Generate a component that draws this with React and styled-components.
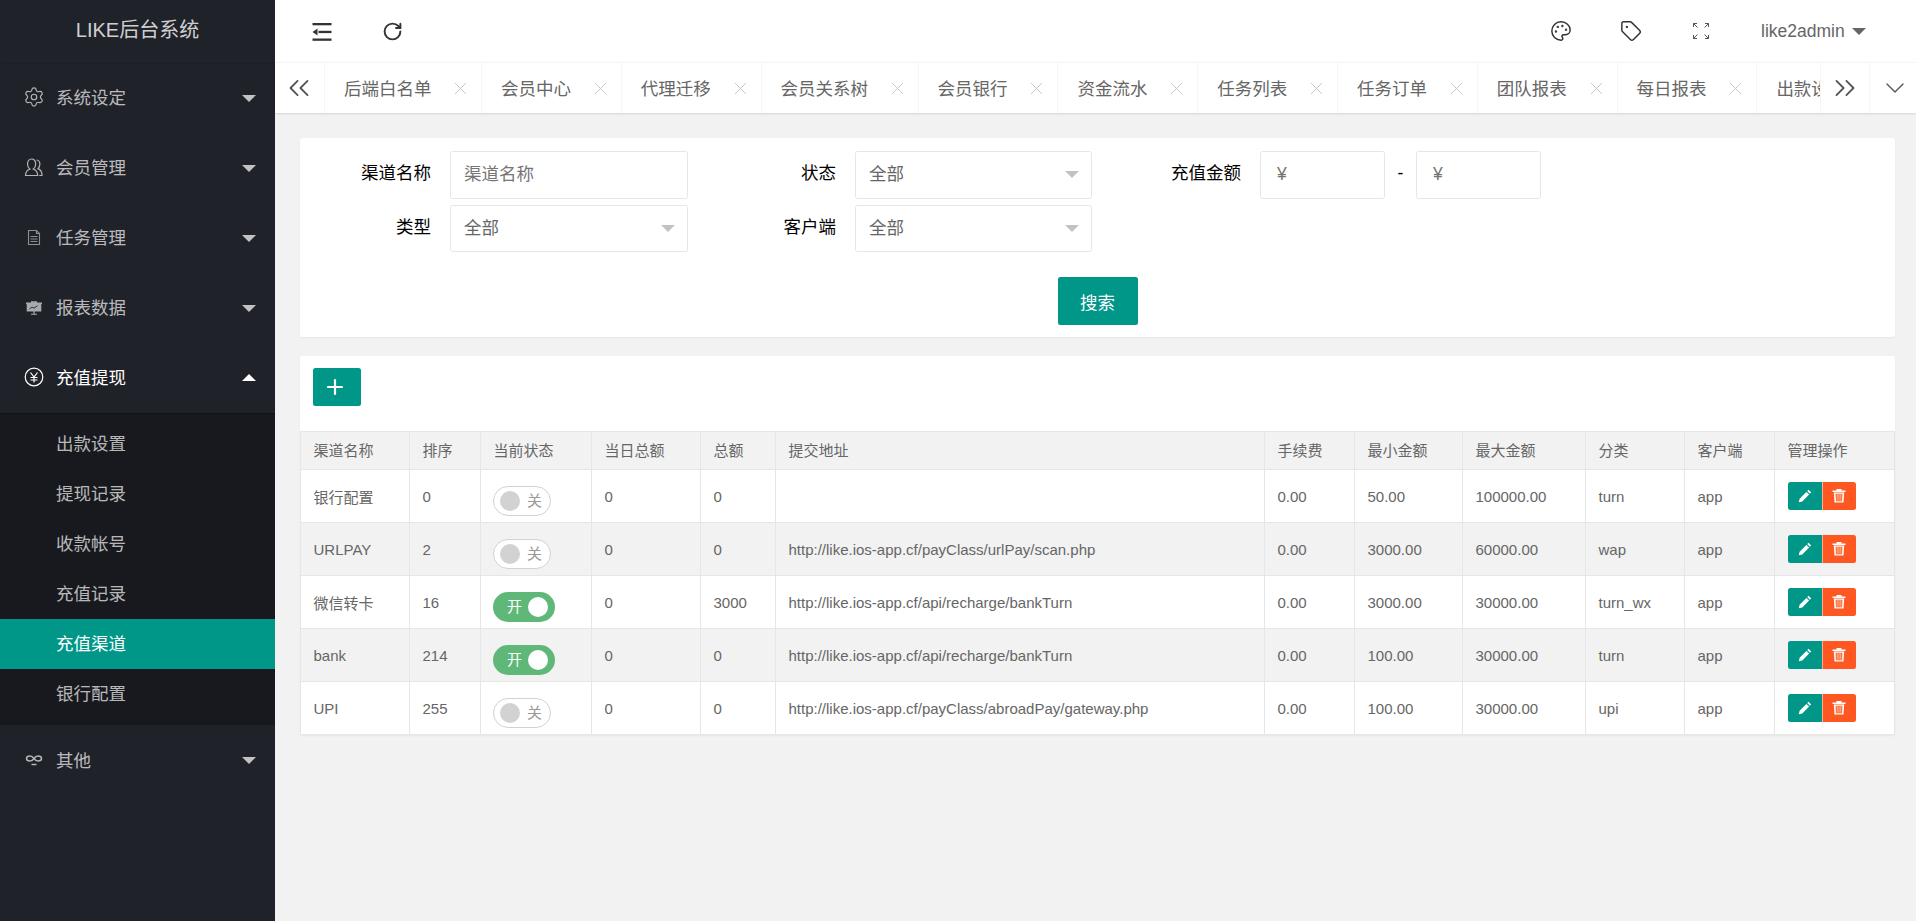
import React from 'react';
import styled, { createGlobalStyle } from 'styled-components';
import { Palette, Tag, ChevronsLeft, ChevronsRight, ChevronDown, X, Plus, RotateCw, Settings } from 'lucide-react';

const FONT = '"Liberation Sans", "Noto Sans CJK SC", sans-serif';

const GlobalStyle = createGlobalStyle`
  html, body {
    margin: 0;
    padding: 0;
    height: 100%;
    overflow: hidden;
    background: #f2f2f2;
    font-family: ${FONT};
  }
  * { box-sizing: border-box; }
`;

const Page = styled.div`
  display: flex;
  width: 1916px;
  height: 921px;
  overflow: hidden;
`;

const Sidebar = styled.aside`
  width: 275px;
  flex: none;
  background: #20222a;
`;

const Logo = styled.div`
  height: 62.5px;
  padding-bottom: 5px;
  display: flex;
  align-items: center;
  justify-content: center;
  font-size: 20px;
  color: rgba(255, 255, 255, 0.8);
  box-shadow: 0 1px 2px rgba(0, 0, 0, 0.1);
`;

const MenuItem = styled.div`
  height: 70px;
  display: flex;
  align-items: center;
  position: relative;
  padding: 0 0 2px 56px;
  font-size: 17.5px;
  color: ${({ $open }) => ($open ? '#fff' : 'rgba(255, 255, 255, 0.7)')};
  &::after {
    content: '';
    position: absolute;
    left: 242px;
    top: ${({ $open }) => ($open ? '31px' : '32px')};
    border-left: 7px solid transparent;
    border-right: 7px solid transparent;
    border-top: ${({ $open }) => ($open ? '0' : '7px solid #c2c2c2')};
    border-bottom: ${({ $open }) => ($open ? '7px solid #fff' : '0')};
  }
`;

const MenuIcon = styled.span`
  position: absolute;
  left: 22px;
  top: 22.5px;
  width: 24px;
  height: 24px;
  display: flex;
  align-items: center;
  justify-content: center;
`;

const SubMenu = styled.div`
  background: #18191e;
  padding: 6.25px 0;
  box-shadow: inset 0 1px 1px rgba(0, 0, 0, 0.2);
`;

const SubItem = styled.div`
  height: 50px;
  display: flex;
  align-items: center;
  padding: 0 0 2px 56px;
  font-size: 17.5px;
  background: ${({ $active }) => ($active ? '#009688' : 'transparent')};
  color: ${({ $active }) => ($active ? '#fff' : 'rgba(255, 255, 255, 0.7)')};
`;

const Main = styled.main`
  flex: 1;
  min-width: 0;
  display: flex;
  flex-direction: column;
`;

const Header = styled.header`
  height: 62px;
  flex: none;
  background: #fff;
  position: relative;
  color: #333;
`;

const HeadIcon = styled.span`
  position: absolute;
  left: ${({ $x }) => $x}px;
  top: 19px;
  width: 24px;
  height: 24px;
  display: flex;
  align-items: center;
  justify-content: center;
  color: ${({ $color }) => $color || '#333'};
`;

const UserName = styled.div`
  position: absolute;
  left: 1486px;
  top: 0;
  height: 62px;
  display: flex;
  align-items: center;
  font-size: 17.5px;
  color: #666;
  &::after {
    content: '';
    margin-left: 7px;
    border-left: 7px solid transparent;
    border-right: 7px solid transparent;
    border-top: 7px solid #666;
    margin-top: 1px;
  }
`;

const TabBar = styled.nav`
  height: 51px;
  flex: none;
  display: flex;
  background: #fff;
  border-top: 1px solid #f6f6f6;
  box-shadow: 0 1px 2px rgba(0, 0, 0, 0.12);
  position: relative;
  z-index: 1;
`;

const TabArrow = styled.div`
  width: ${({ $w }) => $w}px;
  flex: none;
  display: flex;
  align-items: center;
  justify-content: center;
  color: #555;
  border-right: ${({ $noBorder }) => ($noBorder ? '0' : '1px solid #f6f6f6')};
  border-left: ${({ $left }) => ($left ? '1px solid #f6f6f6' : '0')};
  padding-left: ${({ $padL }) => $padL || 0}px;
  padding-right: ${({ $padR }) => $padR || 0}px;
`;

const TabList = styled.div`
  flex: 1;
  min-width: 0;
  display: flex;
  overflow: hidden;
`;

const TabItem = styled.div`
  flex: none;
  position: relative;
  display: flex;
  align-items: center;
  height: 100%;
  padding: 0 50px 2px 19px;
  font-size: 17.5px;
  color: #666;
  white-space: nowrap;
  border-right: 1px solid #f6f6f6;
  width: ${({ $chars }) => ($chars === 5 ? 157 : 139.8)}px;
`;

const TabClose = styled.span`
  position: absolute;
  right: 10px;
  top: 14.5px;
  display: flex;
  color: #c2c2c2;
`;

const Content = styled.div`
  flex: 1;
  padding: 25px 21px 0 25px;
  background: #f2f2f2;
`;

const Card = styled.section`
  width: 1595px;
  background: #fff;
  border-radius: 2.5px;
  box-shadow: 0 1px 2px rgba(0, 0, 0, 0.05);
`;

const FilterCard = styled(Card)`
  height: 199px;
  padding-top: 13px;
  margin-bottom: 19px;
`;

const FormRow = styled.div`
  display: flex;
  height: 47.5px;
  margin-bottom: 6.25px;
`;

const FormLabel = styled.label`
  width: ${({ $w }) => $w}px;
  flex: none;
  padding-right: 19px;
  text-align: right;
  font-size: 17.5px;
  line-height: 45px;
  color: #000;
`;

const Field = styled.div`
  width: ${({ $w }) => $w}px;
  height: 47.5px;
  flex: none;
  position: relative;
  border: 1px solid #e6e6e6;
  border-radius: 2.5px;
  background: #fff;
  padding-left: ${({ $pad }) => $pad || 13}px;
  font-size: 17.5px;
  line-height: 45px;
  color: ${({ $placeholder }) => ($placeholder ? '#757575' : '#666')};
`;

const Select = styled(Field)`
  &::after {
    content: '';
    position: absolute;
    right: 12px;
    top: 19px;
    border-left: 7px solid transparent;
    border-right: 7px solid transparent;
    border-top: 7px solid #c2c2c2;
  }
`;

const Dash = styled.div`
  width: 31px;
  flex: none;
  text-align: center;
  font-size: 17.5px;
  line-height: 45px;
  color: #000;
`;

const SearchRow = styled.div`
  display: flex;
  justify-content: center;
  margin-top: 25px;
`;

const PrimaryButton = styled.button`
  width: 80px;
  height: 47.5px;
  border: 0;
  padding: 0;
  border-radius: 2.5px;
  background: #009688;
  color: #fff;
  font-family: ${FONT};
  font-size: 17.5px;
  display: flex;
  align-items: center;
  justify-content: center;
`;

const Toolbar = styled.div`
  height: 75px;
  padding: 12px 0 0 13px;
`;

const AddButton = styled(PrimaryButton)`
  width: 48px;
  height: 38px;
  padding-right: 4px;
`;

const Table = styled.table`
  width: 1595px;
  table-layout: fixed;
  border-collapse: separate;
  border-spacing: 0;
  font-size: 15px;
  color: #666;
`;

const Th = styled.th`
  height: 39px;
  padding: 0 12.5px 2px;
  font-weight: 400;
  text-align: left;
  background: #f2f2f2;
  border-top: 1px solid #e6e6e6;
  border-right: 1px solid #e6e6e6;
  border-bottom: 1px solid #e6e6e6;
  &:first-child { border-left: 1px solid #e6e6e6; }
`;

const Td = styled.td`
  height: 53px;
  padding: 0 12.5px;
  white-space: nowrap;
  overflow: visible;
  background: ${({ $alt }) => ($alt ? '#f2f2f2' : '#fff')};
  border-right: 1px solid #e6e6e6;
  border-bottom: 1px solid #e6e6e6;
  &:first-child { border-left: 1px solid #e6e6e6; }
`;

const SwitchBox = styled.div`
  position: relative;
  width: ${({ $on }) => ($on ? 62 : 58)}px;
  height: 30px;
  margin: 9px 0 0 -0.5px;
  border-radius: 20px;
  border: ${({ $on }) => ($on ? '0' : '1px solid #d2d2d2')};
  background: ${({ $on }) => ($on ? '#5fb878' : '#fff')};
  display: flex;
  align-items: center;
`;

const SwitchKnob = styled.span`
  position: absolute;
  top: ${({ $on }) => ($on ? 5 : 4)}px;
  left: ${({ $on }) => ($on ? 35 : 6)}px;
  width: 20px;
  height: 20px;
  border-radius: 50%;
  background: ${({ $on }) => ($on ? '#fff' : '#d2d2d2')};
`;

const SwitchText = styled.span`
  position: absolute;
  left: ${({ $on }) => ($on ? 14 : 33)}px;
  top: ${({ $on }) => ($on ? 5 : 4)}px;
  font-size: 15px;
  line-height: 20px;
  color: ${({ $on }) => ($on ? '#fff' : '#999')};
`;

const ActionGroup = styled.div`
  display: flex;
  margin-top: -1px;
`;

const ActionButton = styled.span`
  width: 34px;
  height: 28px;
  display: flex;
  align-items: center;
  justify-content: center;
  padding-right: ${({ $danger }) => ($danger ? 1 : 0)}px;
  background: ${({ $danger }) => ($danger ? '#ff5722' : '#009688')};
  border-radius: ${({ $danger }) => ($danger ? '0 2.5px 2.5px 0' : '2.5px 0 0 2.5px')};
  border-left: ${({ $danger }) => ($danger ? '1px solid rgba(255,255,255,.5)' : '0')};
`;

const GearIcon = () => <Settings size={22} color="#b4b5b7" strokeWidth={1.3} />;

const UserIcon = () => (
  <svg width="20" height="20" viewBox="0 0 20 20" fill="none" stroke="#b4b5b7" strokeWidth="1.2">
    <path d="M1.5 18.5c0-4 2-5.6 4.4-6.5-1.4-1-2.4-2.6-2.4-4.9C3.5 4 5.2 2 7.6 2s4.1 2 4.1 5.1c0 2.3-1 3.9-2.4 4.9 2.4.9 4.4 2.500 4.400 6.500z" />
    <path d="M12.500 3c2 .2 3.400 2 3.400 4.300 0 1.900-.7 3.300-1.900 4.300 2.200.8 4 2.400 4 6.900h-2.800" />
  </svg>
);

const FileIcon = () => (
  <svg width="16" height="17" viewBox="0 0 16 17" fill="none" stroke="#8e8f93" strokeWidth="1.1">
    <path d="M2.500 1.500h8l3 3v11h-11z" />
    <path d="M10.500 1.500v3h3M4.500 7.500h7M4.500 10h7M4.500 12.500h7" />
  </svg>
);

const ScreenIcon = () => (
  <svg width="18" height="18" viewBox="0 0 18 18">
    <path fill="#a9aaad" d="M1 4.500h5V3.200h6v1.300h5V6h-.7v7.500H1.700V6H1z" />
    <path fill="none" stroke="#20222a" strokeWidth="0.9" d="M4.500 11l2.500-2 2 1.200 3.500-2.500" />
    <path fill="#a9aaad" d="M8.400 13h1.200v2.800h2.400v.9H6v-.9h2.400z" />
  </svg>
);

const RmbIcon = () => (
  <svg width="20" height="20" viewBox="0 0 20 20" fill="none" stroke="#fff" strokeWidth="1.2">
    <circle cx="10" cy="10" r="8.800" />
    <path d="M6.500 5.500L10 10l3.500-4.500M6.500 10.500h7M6.500 13h7M10 10v5.500" />
  </svg>
);

const LinkIcon = () => (
  <svg width="18" height="14" viewBox="0 0 18 14" fill="none" stroke="#b4b5b7" strokeWidth="1.500">
    <path d="M9 5.500C7.800 3.800 6.600 3 5 3 3 3 1.500 4 1.500 5.500S3 8 5 8c1.600 0 2.800-.8 4-2.500C10.200 3.800 11.400 3 13 3c2 0 3.500 1 3.500 2.500S15 8 13 8c-1.600 0-2.800-.8-4-2.500z" />
    <path d="M6.500 11.500h5" />
  </svg>
);

const ShrinkIcon = () => (
  <svg width="20" height="20" viewBox="0 0 20 20" fill="#333">
    <rect x="0.500" y="2" width="19" height="2.300" />
    <rect x="6.500" y="9.800" width="13" height="2.300" />
    <rect x="0.500" y="17.500" width="19" height="2.300" />
    <path d="M5.500 7.500v7L0.500 11z" />
  </svg>
);

const FullIcon = () => (
  <svg width="18" height="18" viewBox="0 0 18 18" fill="none" stroke="#555" strokeWidth="1">
    <path d="M1.500 5V1.500H5M1.500 1.500l4 4M13 1.500h3.500V5M16.500 1.500l-4 4M1.500 13v3.500H5M1.500 16.500l4-4M13 16.500h3.500V13M16.500 16.500l-4-4" />
  </svg>
);

const PencilIcon = () => (
  <svg width="14" height="14" viewBox="0 0 14 14" fill="#fff">
    <path d="M10.500 0.800l2.700 2.700-1.300 1.300-2.700-2.700zM8.400 2.900l2.700 2.700-6.800 6.800-3.500.8.800-3.500z" />
  </svg>
);

const TrashIcon = () => (
  <svg width="14" height="15" viewBox="0 0 14 15">
    <path fill="#fff" d="M0.500 2.500h13v1.400H.5zM4.500 1h5v1.500h-5zM1.800 4.500h10.400l-.7 10H2.500zM3.600 5.800l.3 7.400h6.200l.3-7.400z" />
    <path fill="#ffc9a8" d="M4.700 6h.9v6.800h-.9zM6.550 6h.9v6.800h-.9zM8.400 6h.9v6.800h-.9z" />
  </svg>
);

const menuTop = [
  { name: '系统设定', icon: <GearIcon /> },
  { name: '会员管理', icon: <UserIcon /> },
  { name: '任务管理', icon: <FileIcon /> },
  { name: '报表数据', icon: <ScreenIcon /> },
];

const subItems = ['出款设置', '提现记录', '收款帐号', '充值记录', '充值渠道', '银行配置'];

const tabs = ['后端白名单', '会员中心', '代理迁移', '会员关系树', '会员银行', '资金流水', '任务列表', '任务订单', '团队报表', '每日报表', '出款设置'];

const colWidths = [110, 71, 111, 109, 75, 489, 90, 108, 123, 99, 90, 120];

const headers = ['渠道名称', '排序', '当前状态', '当日总额', '总额', '提交地址', '手续费', '最小金额', '最大金额', '分类', '客户端', '管理操作'];

const rows = [
  ['银行配置', '0', false, '0', '0', '', '0.00', '50.00', '100000.00', 'turn', 'app'],
  ['URLPAY', '2', false, '0', '0', 'http://like.ios-app.cf/payClass/urlPay/scan.php', '0.00', '3000.00', '60000.00', 'wap', 'app'],
  ['微信转卡', '16', true, '0', '3000', 'http://like.ios-app.cf/api/recharge/bankTurn', '0.00', '3000.00', '30000.00', 'turn_wx', 'app'],
  ['bank', '214', true, '0', '0', 'http://like.ios-app.cf/api/recharge/bankTurn', '0.00', '100.00', '30000.00', 'turn', 'app'],
  ['UPI', '255', false, '0', '0', 'http://like.ios-app.cf/payClass/abroadPay/gateway.php', '0.00', '100.00', '30000.00', 'upi', 'app'],
];

const Switch = ({ on }) => (
  <SwitchBox $on={on}>
    <SwitchKnob $on={on} />
    <SwitchText $on={on}>{on ? '开' : '关'}</SwitchText>
  </SwitchBox>
);

export default function App() {
  return (
    <Page>
      <GlobalStyle />
      <Sidebar>
        <Logo>LIKE后台系统</Logo>
        {menuTop.map((m) => (
          <MenuItem key={m.name}>
            <MenuIcon>{m.icon}</MenuIcon>
            {m.name}
          </MenuItem>
        ))}
        <MenuItem $open>
          <MenuIcon><RmbIcon /></MenuIcon>
          充值提现
        </MenuItem>
        <SubMenu>
          {subItems.map((s) => (
            <SubItem key={s} $active={s === '充值渠道'}>{s}</SubItem>
          ))}
        </SubMenu>
        <MenuItem>
          <MenuIcon><LinkIcon /></MenuIcon>
          其他
        </MenuItem>
      </Sidebar>
      <Main>
        <Header>
          <HeadIcon $x={35}><ShrinkIcon /></HeadIcon>
          <HeadIcon $x={105}><RotateCw size={21} strokeWidth={2.2} /></HeadIcon>
          <HeadIcon $x={1274} $color="#333"><Palette size={22} strokeWidth={1.6} /></HeadIcon>
          <HeadIcon $x={1344} $color="#333"><Tag size={22} strokeWidth={1.6} /></HeadIcon>
          <HeadIcon $x={1414}><FullIcon /></HeadIcon>
          <UserName>like2admin</UserName>
        </Header>
        <TabBar>
          <TabArrow $w={50} $padR={2}><ChevronsLeft size={34} strokeWidth={1.3} /></TabArrow>
          <TabList>
            {tabs.map((t) => (
              <TabItem key={t} $chars={t.length}>
                {t}
                <TabClose><X size={21} strokeWidth={1} /></TabClose>
              </TabItem>
            ))}
          </TabList>
          <TabArrow $w={50} $left><ChevronsRight size={34} strokeWidth={1.3} /></TabArrow>
          <TabArrow $w={46} $noBorder $padL={4}><ChevronDown size={32} strokeWidth={1} /></TabArrow>
        </TabBar>
        <Content>
          <FilterCard>
            <FormRow>
              <FormLabel $w={150}>渠道名称</FormLabel>
              <Field $w={238} $placeholder>渠道名称</Field>
              <FormLabel $w={167}>状态</FormLabel>
              <Select $w={237}>全部</Select>
              <FormLabel $w={168}>充值金额</FormLabel>
              <Field $w={125} $placeholder $pad={16}>¥</Field>
              <Dash>-</Dash>
              <Field $w={125} $placeholder $pad={16}>¥</Field>
            </FormRow>
            <FormRow>
              <FormLabel $w={150}>类型</FormLabel>
              <Select $w={238}>全部</Select>
              <FormLabel $w={167}>客户端</FormLabel>
              <Select $w={237}>全部</Select>
            </FormRow>
            <SearchRow>
              <PrimaryButton>搜索</PrimaryButton>
            </SearchRow>
          </FilterCard>
          <Card>
            <Toolbar>
              <AddButton aria-label="添加"><Plus size={24} strokeWidth={2.2} /></AddButton>
            </Toolbar>
            <Table>
              <colgroup>
                {colWidths.map((w, i) => <col key={i} width={w} />)}
              </colgroup>
              <thead>
                <tr>
                  {headers.map((h) => <Th key={h}>{h}</Th>)}
                </tr>
              </thead>
              <tbody>
                {rows.map((r, i) => (
                  <tr key={r[0]}>
                    {r.map((c, j) => (
                      <Td key={j} $alt={i % 2 === 1}>
                        {j === 2 ? <Switch on={c} /> : c}
                      </Td>
                    ))}
                    <Td $alt={i % 2 === 1}>
                      <ActionGroup>
                        <ActionButton><PencilIcon /></ActionButton>
                        <ActionButton $danger><TrashIcon /></ActionButton>
                      </ActionGroup>
                    </Td>
                  </tr>
                ))}
              </tbody>
            </Table>
          </Card>
        </Content>
      </Main>
    </Page>
  );
}
